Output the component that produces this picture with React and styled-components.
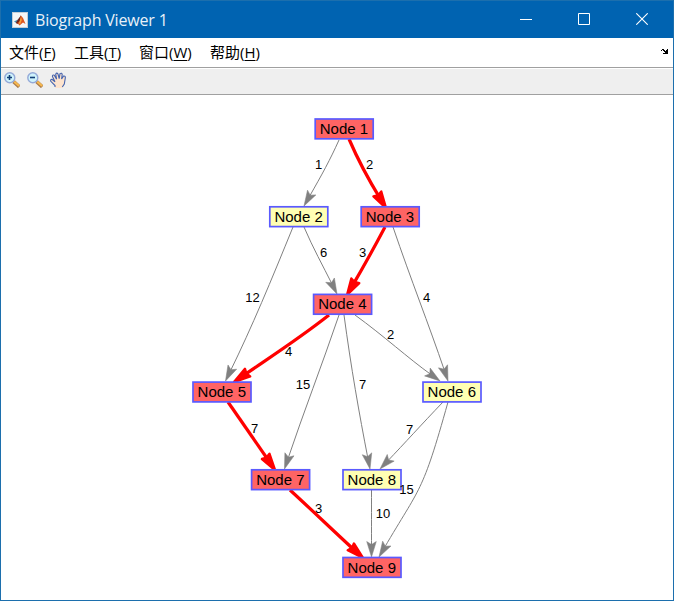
import React from "react";
import styled, { createGlobalStyle } from "styled-components";

const GlobalStyle = createGlobalStyle`
  * { box-sizing: border-box; }
  body { margin: 0; overflow: hidden; }
`;

const Window = styled.main`
  width: 674px;
  height: 601px;
  display: flex;
  flex-direction: column;
  border: 1px solid #1c6fad;
  background: #fff;
  font-family: "Liberation Sans", "Noto Sans CJK SC", sans-serif;
  color: #000;
`;

const TitleBar = styled.header`
  height: 37px;
  flex: none;
  display: flex;
  align-items: center;
  background: #0063b1;
  padding: 0 2px 0 11px;
`;

const Title = styled.h1`
  margin: 0 0 0 7px;
  flex: 1;
  font: 400 16px/22px "Open Sans", "Noto Sans", sans-serif;
  letter-spacing: -0.18px;
  color: #e9f1f8;
`;

const WindowButton = styled.button`
  width: 58px;
  height: 34px;
  margin-bottom: 2px;
  padding: 0;
  border: 0;
  background: none;
  display: grid;
  place-items: center;
`;

const MenuBar = styled.nav`
  height: 30px;
  flex: none;
  display: flex;
  align-items: center;
  gap: 17px;
  padding: 0 5px 2px 8px;
  border-bottom: 1px solid #a0a0a0;
`;

const MenuItem = styled.span`
  width: ${(p) => p.$width}px;
  font: 15px/22px "Open Sans", "Noto Sans CJK SC", sans-serif;
  white-space: nowrap;
  u { text-underline-offset: 2px; text-decoration-thickness: 1px; }
`;

const DockArrow = styled.svg`
  margin-left: auto;
`;

const Toolbar = styled.div`
  height: 27px;
  flex: none;
  display: flex;
  align-items: flex-start;
  gap: 7px;
  padding: 3px 3px 0;
  background: #efefef;
  border-top: 1px solid #fff;
  border-bottom: 1px solid #a0a0a0;
`;

const Canvas = styled.section`
  position: relative;
  flex: 1;
`;

const Graph = styled.svg`
  display: block;
  width: 672px;
  height: 505px;
`;

const NodeLabel = styled.div`
  position: absolute;
  left: ${(p) => p.$x - 1}px;
  top: ${(p) => p.$y - 95}px;
  width: 60px;
  height: 22px;
  font-size: 15px;
  line-height: 21px;
  padding-left: 5.6px;
  white-space: nowrap;
`;

const Weight = styled.span`
  position: absolute;
  left: ${(p) => p.$x - 1}px;
  top: ${(p) => p.$y - 95}px;
  font-size: 13px;
  line-height: 16px;
  transform: translate(-50%, -50%);
`;

const nodes = [
  { id: 1, x: 314.2, y: 118, onPath: true },
  { id: 2, x: 268.8, y: 205.8 },
  { id: 3, x: 360.2, y: 205.8, onPath: true },
  { id: 4, x: 312.6, y: 293.4, onPath: true },
  { id: 5, x: 192, y: 381.1, onPath: true },
  { id: 6, x: 422, y: 381.1 },
  { id: 7, x: 250.6, y: 468.8, onPath: true },
  { id: 8, x: 342, y: 468.8 },
  { id: 9, x: 342, y: 556.5, onPath: true },
];

// Each edge is a cubic: start, two control points, tip.
const edges = [
  { p: [339, 140, 330, 160, 320, 178, 304, 206], w: 1, lx: 318.5, ly: 165 },
  { p: [349, 139, 358, 160, 370, 182, 386, 208], w: 2, lx: 369.5, ly: 165, hot: true },
  { p: [304, 227, 313, 248, 325, 270, 337, 294], w: 6, lx: 323.5, ly: 253 },
  { p: [385, 227, 375, 246, 361, 271, 347, 295], w: 3, lx: 362.5, ly: 253, hot: true },
  { p: [293, 227, 271, 281, 250, 331, 225.5, 381], w: 12, lx: 252.5, ly: 298 },
  { p: [393, 227, 411, 280, 430, 328, 448, 381], w: 4, lx: 426.5, ly: 298 },
  { p: [329, 315, 300, 338, 266, 360, 234, 382], w: 4, lx: 288.5, ly: 352, hot: true },
  { p: [339, 315, 322, 365, 302, 417, 284.5, 469], w: 15, lx: 303, ly: 385 },
  { p: [344, 315, 351, 367, 360, 418, 370, 469], w: 7, lx: 362.5, ly: 385 },
  { p: [355, 315, 384, 336, 412, 361, 440, 381], w: 2, lx: 390.5, ly: 335 },
  { p: [228, 402, 244, 425, 260, 448, 275, 470], w: 7, lx: 254.5, ly: 429, hot: true },
  { p: [443, 402, 421, 425, 402, 446, 380, 469], w: 7, lx: 409.5, ly: 430 },
  { p: [448, 402, 422, 495, 418, 490, 379, 557], w: 15, lx: 406.5, ly: 490 },
  { p: [371.5, 490, 371.5, 510, 371.5, 535, 371.5, 557], w: 10, lx: 383, ly: 514 },
  { p: [290, 490, 315, 513, 340, 537, 363, 558], w: 3, lx: 318.5, ly: 509, hot: true },
];

function Edge({ p, hot }) {
  const [x1, y1, x2, y2, x3, y3, x, y] = p;
  const rad = Math.atan2(y - y3, x - x3);
  const angle = (rad * 180) / Math.PI;
  const ex = x - 10 * Math.cos(rad);
  const ey = y - 10 * Math.sin(rad);
  const color = hot ? "#ff0000" : "#808080";
  return (
    <g stroke={color} fill="none">
      <path
        d={`M${x1} ${y1}C${x2} ${y2} ${x3 - 5 * Math.cos(rad)} ${y3 - 5 * Math.sin(rad)} ${ex} ${ey}`}
        strokeWidth={hot ? 3.2 : 1}
      />
      <path
        d={hot ? "M0 0L-16.5 4.6L-15 0L-16.5 -4.6Z" : "M0 0L-15.5 4.8L-12.5 0L-15.5 -4.8Z"}
        transform={`translate(${x} ${y}) rotate(${angle})`}
        fill={color}
        strokeWidth={hot ? 2.4 : 0.5}
        strokeLinejoin="round"
      />
    </g>
  );
}

function AppIcon() {
  return (
    <svg width="16" height="16" viewBox="0 0 16 16">
      <path fill="#f4f6f7" d="M0 0h16v16H0z" />
      <path fill="#c3ced6" d="M0 0h16v1H0zM15 0h1v16h-1zM0 15h16v1H0zM0 0h1v16H0z" />
      <path fill="#4a8fb0" d="M2 9.5L6 7.5L9 3.5L8 10L5 11.5Z" />
      <path fill="#782319" d="M6 7.5L9 3.5L9 10L5 12L4 10.5Z" />
      <path fill="#dc5620" d="M8.7 3.2L11 6L13.5 12L11 10.5L7.5 13.5L5.5 11L8 9Z" />
      <path fill="#f5a13a" d="M9 4.5L9.8 8L8 12.5L7 11Z" />
    </svg>
  );
}

function Magnifier({ plus }) {
  return (
    <svg width="16" height="16" viewBox="0 0 16 16">
      <path d="M9.6 9.6L15.2 14.8" stroke="#a87a4a" strokeWidth="3.6" />
      <path d="M10.2 9.6L15.2 14" stroke="#f6b850" strokeWidth="2.2" />
      <circle cx="5.8" cy="5.8" r="5" fill="#cff3fb" stroke="#94a9d8" strokeWidth="1.4" />
      <path d={plus ? "M3 5.5h5M5.5 3v5" : "M3 5.5h5"} stroke="#123f78" strokeWidth="1.6" />
    </svg>
  );
}

function Hand() {
  return (
    <svg width="17" height="17" viewBox="0 0 17 17">
      <path
        d="M5 16V13.5L.8 9.3Q.2 7.3 2 7.3L5 9.8L2.4 4.4Q2.4 2.4 4.3 3.2L6.6 7.2L5.7 2.2Q6.8 .2 8 2L9.2 6.6L10 1.6Q11.8 .4 12.2 2.6L11.6 7L13.6 4Q15.6 3.6 15.3 6L14.3 12L12.3 16Z"
        fill="#fde3cd"
      />
      <path
        d="M5 15V13.5L.8 9.3Q.2 7.3 2 7.3L5 9.8L2.4 4.4Q2.4 2.4 4.3 3.2L6.6 7.2L5.7 2.2Q6.8 .2 8 2L9.2 6.6L10 1.6Q11.8 .4 12.2 2.6L11.6 7L13.6 4Q15.6 3.6 15.3 6L14.3 12L12.3 15"
        fill="none"
        stroke="#4463ae"
        strokeWidth="1.1"
      />
    </svg>
  );
}

const menus = [
  { label: "文件", key: "F", width: 48 },
  { label: "工具", key: "T", width: 48 },
  { label: "窗口", key: "W", width: 54 },
  { label: "帮助", key: "H", width: 52 },
];

export default function App() {
  return (
    <Window>
      <GlobalStyle />
      <TitleBar>
        <AppIcon />
        <Title>Biograph Viewer 1</Title>
        <WindowButton aria-label="Minimize">
          <svg width="12" height="12" stroke="#fff"><path d="M0 6.5h12" /></svg>
        </WindowButton>
        <WindowButton aria-label="Maximize">
          <svg width="12" height="12" fill="none" stroke="#fff"><path d="M.5.5h11v11H.5z" /></svg>
        </WindowButton>
        <WindowButton aria-label="Close">
          <svg width="12" height="12" stroke="#fff" strokeWidth="1.1"><path d="M.3.3L11.7 11.7M11.7.3L.3 11.7" /></svg>
        </WindowButton>
      </TitleBar>
      <MenuBar>
        {menus.map((m) => (
          <MenuItem key={m.key} $width={m.width}>
            {m.label}(<u>{m.key}</u>)
          </MenuItem>
        ))}
        <DockArrow width="7" height="5" viewBox="0 0 7 5" shapeRendering="crispEdges">
          <path d="M1 0h2v1h1v1h1V1h1V0h1v5H2V4h2V3H3V2H2V1H1zM0 1h1v1H0z" />
        </DockArrow>
      </MenuBar>
      <Toolbar>
        <Magnifier plus />
        <Magnifier />
        <Hand />
      </Toolbar>
      <Canvas>
        <Graph viewBox="1 95 672 505">
          {edges.map((e, i) => <Edge key={i} {...e} />)}
          {nodes.map((n) => (
            <rect
              key={n.id}
              x={n.x + 1}
              y={n.y + 1}
              width="58"
              height="19.8"
              fill={n.onPath ? "#ff6464" : "#ffffb3"}
              stroke="#5a5aff"
              strokeWidth="1.7"
            />
          ))}
        </Graph>
        {nodes.map((n) => (
          <NodeLabel key={n.id} $x={n.x} $y={n.y}>Node {n.id}</NodeLabel>
        ))}
        {edges.map((e, i) => (
          <Weight key={i} $x={e.lx} $y={e.ly}>{e.w}</Weight>
        ))}
      </Canvas>
    </Window>
  );
}
